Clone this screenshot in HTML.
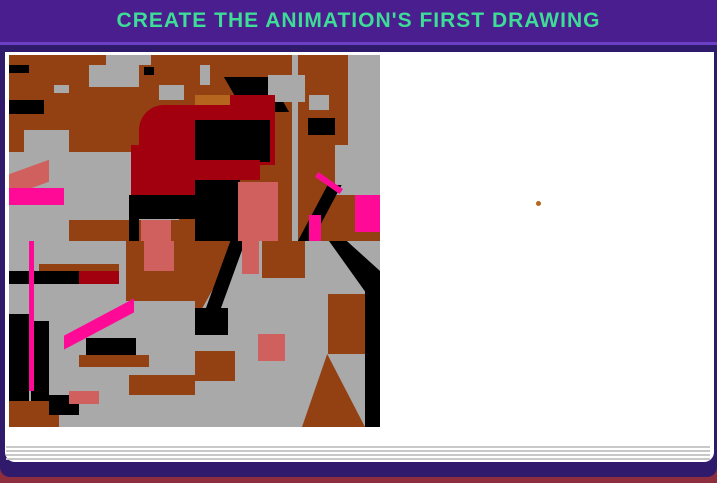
<!DOCTYPE html>
<html><head><meta charset="utf-8"><style>
*{margin:0;padding:0;box-sizing:border-box}
body{width:717px;height:483px;overflow:hidden;background:#8e2d3e;font-family:"Liberation Sans",sans-serif;position:relative}
#frame{position:absolute;left:0;top:0;width:717px;height:477px;background:#2f1a6c;border-radius:0 0 10px 10px}
#hdr{position:absolute;left:0;top:0;width:717px;height:45px;background:#4a1e8e;border-bottom:3px solid #6b40c4;text-align:center;color:#3ddc97;font-weight:bold;font-size:21px;letter-spacing:1px;line-height:42px}
#card{position:absolute;left:5px;top:52px;width:709px;height:410px;background:#fff;border-radius:0 0 10px 10px}
.ln{position:absolute;left:6px;width:704px;height:2px;background:#c8c8c8}
#pic{position:absolute;left:9px;top:55px;width:371px;height:372px;background:#934112;overflow:hidden}
#pic div{position:absolute}
.g{background:#a9a9a9}.k{background:#000}.r{background:#a3000f}.p{background:#ff0a96}.s{background:#d0605e}.b{background:#934112}.o{background:#b5651d}
</style></head><body>
<div id="frame"></div>
<div id="hdr">CREATE THE ANIMATION'S FIRST DRAWING</div>
<div id="card"></div>
<div class="ln" style="top:446px"></div><div class="ln" style="top:450px"></div><div class="ln" style="top:454px"></div><div class="ln" style="top:458px"></div>
<div id="pic">
<!-- Q1 -->
<div class="g" style="left:80px;top:10px;width:50px;height:22px"></div>
<div class="g" style="left:97px;top:0;width:45px;height:10px"></div>
<div class="g" style="left:150px;top:30px;width:25px;height:15px"></div>
<div class="g" style="left:45px;top:30px;width:15px;height:8px"></div>
<div class="k" style="left:0;top:10px;width:20px;height:8px"></div>
<div class="k" style="left:0;top:45px;width:35px;height:14px"></div>
<div class="k" style="left:135px;top:12px;width:10px;height:8px"></div>
<div class="g" style="left:15px;top:75px;width:45px;height:25px"></div>
<div class="g" style="left:0;top:97px;width:123px;height:57px"></div>
<div class="g" style="left:0;top:150px;width:60px;height:36px"></div>
<div class="g" style="left:55px;top:150px;width:115px;height:15px"></div>
<div class="s" style="left:0;top:112px;width:40px;height:22px;transform:skewY(-20deg)"></div>
<div class="r" style="left:130px;top:50px;width:56px;height:90px;border-radius:25px 0 0 0"></div>
<div class="r" style="left:122px;top:90px;width:64px;height:50px"></div>
<div class="k" style="left:120px;top:140px;width:66px;height:24px"></div>
<div class="k" style="left:120px;top:160px;width:10px;height:26px"></div>
<div class="s" style="left:132px;top:165px;width:30px;height:21px"></div>
<div class="p" style="left:0;top:133px;width:55px;height:17px"></div>
<!-- Q2 -->
<div class="g" style="left:191px;top:10px;width:10px;height:20px"></div>
<div class="k" style="left:225px;top:22px;width:45px;height:35px;transform:skewX(30deg)"></div>
<div class="g" style="left:259px;top:20px;width:37px;height:27px"></div>
<div class="r" style="left:186px;top:40px;width:80px;height:70px"></div>
<div class="o" style="left:186px;top:40px;width:35px;height:10px"></div>
<div class="k" style="left:186px;top:65px;width:75px;height:42px"></div>
<div class="r" style="left:186px;top:105px;width:65px;height:20px"></div>
<div class="k" style="left:186px;top:125px;width:45px;height:61px"></div>
<div class="s" style="left:229px;top:127px;width:40px;height:59px"></div>
<div class="g" style="left:283px;top:0;width:6px;height:186px"></div>
<div class="k" style="left:299px;top:63px;width:27px;height:17px"></div>
<div class="g" style="left:339px;top:0;width:32px;height:110px"></div>
<div class="g" style="left:326px;top:90px;width:45px;height:50px"></div>
<div class="g" style="left:300px;top:40px;width:20px;height:15px"></div>
<div class="k" style="left:300px;top:130px;width:14px;height:70px;transform:skewX(-28deg)"></div>
<div class="p" style="left:346px;top:140px;width:25px;height:37px"></div>
<div class="p" style="left:300px;top:160px;width:12px;height:26px"></div>
<div class="p" style="left:305px;top:125px;width:30px;height:6px;transform:rotate(35deg)"></div>
<!-- Q3 -->
<div class="g" style="left:0;top:186px;width:186px;height:186px"></div>
<div class="b" style="left:30px;top:209px;width:80px;height:8px"></div>
<div class="k" style="left:0;top:216px;width:70px;height:13px"></div>
<div class="r" style="left:70px;top:216px;width:40px;height:13px"></div>
<div class="b" style="left:117px;top:186px;width:69px;height:60px"></div>
<div class="s" style="left:135px;top:186px;width:30px;height:30px"></div>
<div class="k" style="left:0;top:259px;width:20px;height:107px"></div>
<div class="k" style="left:22px;top:266px;width:18px;height:100px"></div>
<div class="p" style="left:55px;top:262px;width:70px;height:14px;transform:skewY(-28deg)"></div>
<div class="k" style="left:77px;top:283px;width:50px;height:17px"></div>
<div class="b" style="left:70px;top:300px;width:70px;height:12px"></div>
<div class="b" style="left:0;top:346px;width:50px;height:26px"></div>
<div class="k" style="left:40px;top:340px;width:30px;height:20px"></div>
<div class="b" style="left:120px;top:320px;width:66px;height:20px"></div>
<div class="s" style="left:60px;top:336px;width:30px;height:13px"></div>
<div class="p" style="left:20px;top:186px;width:5px;height:150px"></div>
<!-- Q4 -->
<div class="g" style="left:186px;top:186px;width:185px;height:186px"></div>
<div class="b" style="left:186px;top:186px;width:45px;height:80px;clip-path:polygon(0 0,100% 0,0 100%)"></div>
<div class="k" style="left:205px;top:186px;width:15px;height:90px;transform:skewX(-20deg)"></div>
<div class="k" style="left:186px;top:253px;width:33px;height:27px"></div>
<div class="b" style="left:253px;top:186px;width:43px;height:37px"></div>
<div class="s" style="left:233px;top:186px;width:17px;height:33px"></div>
<div class="k" style="left:320px;top:186px;width:51px;height:50px;clip-path:polygon(0 0,35% 0,100% 60%,100% 100%,70% 100%)"></div>
<div class="k" style="left:356px;top:236px;width:15px;height:136px"></div>
<div class="b" style="left:319px;top:239px;width:37px;height:60px"></div>
<div class="b" style="left:293px;top:299px;width:63px;height:73px;clip-path:polygon(0 100%,40% 0,100% 100%)"></div>
<div class="b" style="left:186px;top:296px;width:40px;height:30px"></div>
<div class="s" style="left:249px;top:279px;width:27px;height:27px"></div>
</div>
<div style="position:absolute;left:536px;top:201px;width:5px;height:5px;border-radius:50%;background:#b5651d"></div>
</body></html>
